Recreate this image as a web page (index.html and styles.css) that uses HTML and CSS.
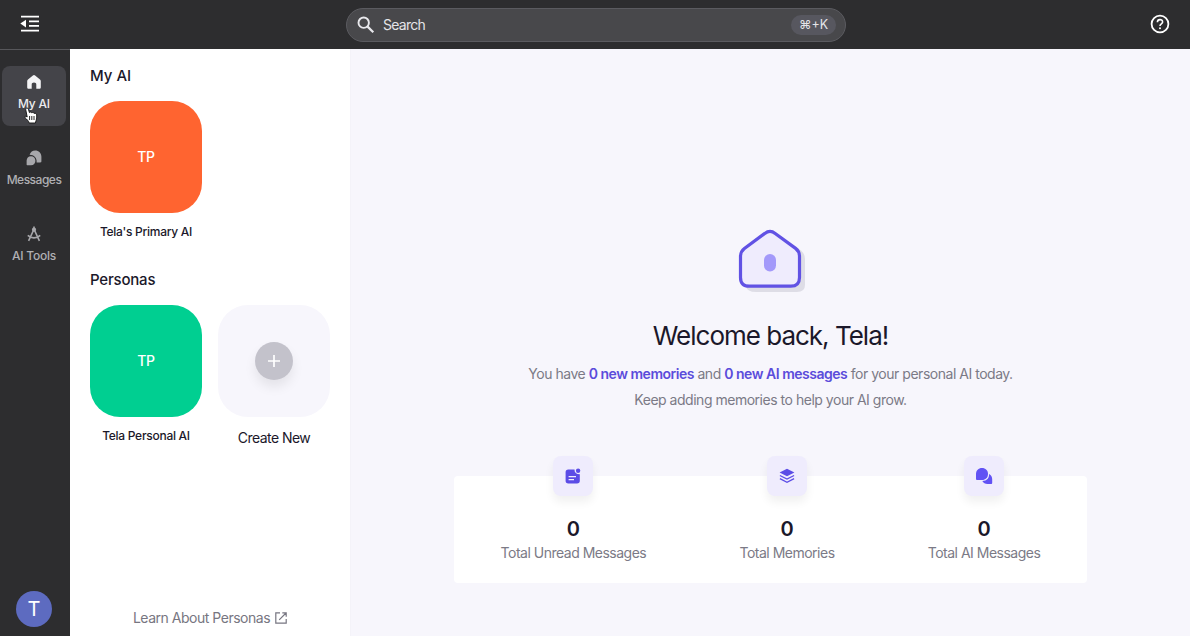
FILE: index.html
```html
<!DOCTYPE html>
<html lang="en">
<head>
<meta charset="utf-8">
<title>Personal AI</title>
<link rel="stylesheet" href="styles.css">
</head>
<body>
<div class="app">
  <header class="topbar">
    <svg class="menu-icon" viewBox="0 0 20 18" width="20" height="18"><path d="M1 1.6H19M9 6.3H19M9 10.9H19M1 15.6H19" stroke="#fff" stroke-width="1.7" fill="none"/><path d="M0.3 8.6L6 4.8V12.4Z" fill="#fff"/></svg>
    <div class="search">
      <svg viewBox="0 0 18 18" width="18" height="18"><circle cx="6.7" cy="6.7" r="5.2" fill="none" stroke="#e8e8ec" stroke-width="1.9"/><path d="M10.6 10.6L16.3 16.3" stroke="#e8e8ec" stroke-width="2.2"/></svg>
      <span class="search-text">Search</span>
      <span class="shortcut">⌘+K</span>
    </div>
    <svg class="help-icon" viewBox="0 0 20 20" width="20" height="20"><circle cx="10" cy="10" r="8.4" fill="none" stroke="#fff" stroke-width="1.8"/><path d="M7.4 8.2C7.4 4.7 12.6 4.8 12.6 8C12.6 9.9 10 9.9 10 12" fill="none" stroke="#fff" stroke-width="1.6"/><circle cx="10" cy="14.3" r="1" fill="#fff"/></svg>
  </header>
  <div class="body">
    <nav class="rail">
      <a class="rail-item active"><svg viewBox="0 0 16 16" width="16" height="16"><path d="M8 1.1C8.4 1.1 8.8 1.3 9.1 1.5L14 5.6C14.5 6 14.8 6.5 14.8 7.1V13.2C14.8 14.2 14.2 14.8 13.2 14.8H10.3V10.5C10.3 9.3 9.4 8.6 8 8.6S5.7 9.3 5.7 10.5V14.8H2.8C1.8 14.8 1.2 14.2 1.2 13.2V7.1C1.2 6.5 1.5 6 2 5.6L6.9 1.5C7.2 1.3 7.6 1.1 8 1.1Z" fill="#f4f4f6"/></svg><span class="t-myai">My AI</span></a>
      <a class="rail-item"><svg viewBox="0 0 16 16" width="16" height="16"><path d="M3.6 4.8C4.5 2.1 6.6 .6 9.2 .6C12.8 .6 15.4 3.2 15.4 6.8V11.2C15.4 12 15 12.4 14.2 12.4H10.6C11.2 8.2 8 4.8 3.6 4.8Z" fill="#a7a7ab"/><path d="M.6 10.7C.6 8.1 2.4 6.2 5 6.2S9.4 8.1 9.4 10.7C9.4 13.3 7.6 15.2 5 15.2H1.6C.9 15.2 .6 14.8 .6 14.2Z" fill="#a7a7ab"/></svg><span class="t-messages">Messages</span></a>
      <a class="rail-item"><svg viewBox="0 0 16 16" width="16" height="16"><path d="M8 .6V3M7.4 4.5L2.6 14.8M8.6 4.5L13.4 14.8M1.8 9.4C5.2 12.7 10.8 12.7 14.2 9.4" fill="none" stroke="#a7a7ab" stroke-width="1.6"/><circle cx="8" cy="3.7" r="2.1" fill="#a7a7ab"/></svg><span class="t-tools">AI Tools</span></a>
      <div class="avatar">T</div>
      <svg class="cursor" viewBox="0 0 14 17" width="14" height="17"><path d="M2.4 1.2C3.6 .6 4.3 1.6 4.6 2.8L5.4 5.6C6.4 4.8 7.4 5 7.8 5.9C8.7 5.2 9.8 5.4 10.1 6.4C11.5 5.8 12.7 6.6 12.7 8V11C12.7 12.9 11.6 14 11.4 16H5.2C4.8 14.2 2.9 12.4 1.1 10.7C.3 9.7 1.5 8.7 3.2 10L1.8 3C1.6 2.2 1.7 1.5 2.4 1.2Z" fill="#fff" stroke="#111" stroke-width=".9"/><path d="M5.6 9V13M7.8 9V13M10 9V13" stroke="#111" stroke-width=".9"/></svg>
    </nav>
    <aside class="panel">
      <h2 class="h-myai">My AI</h2>
      <div class="tiles">
        <div class="tile"><div class="square orange">TP</div><span class="name n-primary">Tela's Primary AI</span></div>
      </div>
      <h2 class="h-personas">Personas</h2>
      <div class="tiles">
        <div class="tile"><div class="square green">TP</div><span class="name n-personal">Tela Personal AI</span></div>
        <div class="tile"><div class="square blank"><span class="plus"><svg viewBox="0 0 14 14" width="14" height="14"><path d="M7 1V13M1 7H13" stroke="#fff" stroke-width="1.7"/></svg></span></div><span class="name create">Create New</span></div>
      </div>
      <a class="learn"><span>Learn About Personas</span><svg viewBox="0 0 12 12" width="12" height="12"><path d="M5 .9H.8V11.2H11.2V7M7.3 .8H11.2V4.7M11 1L4.2 7.8" fill="none" stroke="#777681" stroke-width="1.2"/></svg></a>
    </aside>
    <main class="main">
      <svg class="house" viewBox="0 0 72 70" width="72" height="70"><path d="M12 27L36 8L62 22Q68 26 68 32V58Q68 65 60 65H19Q10 65 9 59Z" fill="#dedde6"/><path d="M27.8 6.4Q33 2.4 38.2 6.4L58.6 21.4Q62.5 24.4 62.5 29.5V50.5Q62.5 59.2 53.8 59.2H12.2Q3.5 59.2 3.5 50.5V29.5Q3.5 24.4 7.4 21.4Z" fill="#efecfd" stroke="#6152e4" stroke-width="3.2"/><rect x="27" y="27" width="12" height="17.5" rx="6" fill="#a399fa"/></svg>
      <h1>Welcome back, Tela!</h1>
      <p class="line1">You have <b>0 new memories</b> and <b>0 new AI messages</b> for your personal AI today.</p>
      <p class="line2">Keep adding memories to help your AI grow.</p>
      <section class="stats">
        <div class="stat"><span class="badge"><svg viewBox="0 0 16 16" width="16" height="16"><path d="M3.3 1.4H9.5Q9.3 5.8 14.8 6.3V12.7Q14.8 15.4 12 15.4H3.3Q.6 15.4 .6 12.7V4Q.6 1.4 3.3 1.4Z" fill="#5b4ce6"/><circle cx="13.1" cy="2.8" r="2.2" fill="#5b4ce6"/><path d="M3.6 8.7H11M3.6 11.7H9" stroke="#efecfd" stroke-width="1.3"/></svg></span><strong>0</strong><span class="label s1">Total Unread Messages</span></div>
        <div class="stat"><span class="badge"><svg viewBox="0 0 16 16" width="16" height="16"><path d="M8 .7L15.4 4.5L8 8.3L.6 4.5Z" fill="#5b4ce6"/><path d="M.9 7.5L8 11.1L15.1 7.5M.9 10.7L8 14.3L15.1 10.7" fill="none" stroke="#5b4ce6" stroke-width="1.3"/></svg></span><strong>0</strong><span class="label s2">Total Memories</span></div>
        <div class="stat"><span class="badge"><svg viewBox="0 0 18 18" width="18" height="18"><path d="M1 7C1 3.4 3.5 1 7 1S13 3.5 13 7S10.5 13 7 13H2.3C1.4 13 1 12.6 1 11.7Z" fill="#6152f4"/><path d="M14 7.1C16.3 8.2 17.2 10.2 17.2 12.3V15.8C17.2 16.6 16.8 17 16 17H12.5C10.3 17 8.3 16.1 7.3 14.1C11.7 14.2 14.4 11.2 14 7.1Z" fill="#6152f4"/></svg></span><strong>0</strong><span class="label s3">Total AI Messages</span></div>
      </section>
    </main>
  </div>
</div>
</body>
</html>
```
FILE: styles.css
```css
* { box-sizing: border-box; }
body { margin: 0; font-family: Inter, "Noto Sans", sans-serif; background: #2d2d2f; }
h1, h2, p { margin: 0; }
svg { display: block; flex: none; }
.app { width: 1190px; height: 636px; display: flex; flex-direction: column; overflow: hidden; }
.topbar { height: 49px; flex: none; display: grid; grid-template-columns: 346px 500px 1fr; align-items: center; background: #2d2d2f; }
.menu-icon { margin: 0 0 2px 20px; }
.search { height: 34px; display: flex; align-items: center; padding: 0 9px 0 11px; border: 1px solid #5b5b60; border-radius: 17px; background: #48484b; color: #e4e4e8; font-size: 14px; }
.search svg { margin-left: -1px; }
.search-text { margin-left: 8px; flex: 1; letter-spacing: -.75px; }
.shortcut { width: 45px; height: 20px; border-radius: 10px; background: #57575f; display: flex; align-items: center; justify-content: center; font-size: 12.5px; }
.help-icon { justify-self: end; margin: 0 20px 1px 0; }
.body { flex: 1; display: flex; min-height: 0; }
.rail { width: 70px; flex: none; position: relative; display: flex; flex-direction: column; gap: 16px; padding: 16px 4px 9px 2px; background: #2d2d2f; border-top: 1px solid #57575b; color: #b0b0b4; font-size: 12px; font-weight: 500; }
.rail-item { height: 60px; flex: none; border-radius: 8px; display: flex; flex-direction: column; align-items: center; gap: 6px; padding-top: 8px; line-height: 15px; white-space: nowrap; }
.active { background: #444449; color: #ececef; }
.t-myai { letter-spacing: -.2px; }
.t-messages { letter-spacing: -.5px; }
.t-tools { letter-spacing: -.25px; }
.avatar { width: 36px; height: 36px; border-radius: 50%; margin: auto 0 0 14px; background: #5d6bc0; color: #fff; display: grid; place-items: center; font-size: 20px; font-weight: 400; }
.cursor { position: absolute; left: 24px; top: 57px; }
.panel { width: 281px; flex: none; background: #fff; padding: 16px 20px 9px; display: flex; flex-direction: column; color: #1b182a; border-right: 1px solid #f4f3f9; }
h2 { font-size: 15px; line-height: 22px; font-weight: 500; }
.tiles { display: flex; gap: 16px; margin-top: 14px; }
.h-personas { margin-top: 29px; letter-spacing: -.2px; }
.tile { width: 112px; display: flex; flex-direction: column; align-items: center; }
.square { width: 112px; height: 112px; border-radius: 30px; display: grid; place-items: center; color: #fff; font-size: 14px; font-weight: 500; letter-spacing: -.2px; }
.orange { background: #ff6430; padding-bottom: 1px; }
.green { background: #00cf91; padding-bottom: 1px; }
.blank { background: #f7f6fc; }
.plus { width: 38px; height: 38px; border-radius: 50%; background: #c3c2cb; display: grid; place-items: center; box-shadow: 0 7px 12px #00000014; }
.name { margin-top: 11px; font-size: 12px; line-height: 16px; font-weight: 500; white-space: nowrap; letter-spacing: -.27px; }
.create { margin-top: 12px; font-size: 14px; line-height: 18px; font-weight: 400; letter-spacing: -.55px; }
.learn { margin-top: auto; display: flex; justify-content: center; align-items: center; gap: 5px; font-size: 14px; line-height: 18px; letter-spacing: -.48px; color: #777681; }
.main { flex: 1; background: #f7f6fc; display: flex; flex-direction: column; align-items: center; padding-top: 178px; color: #1b182a; }
.house { display: block; margin-left: 5px; }
h1 { font-size: 26px; line-height: 32px; font-weight: 400; margin-top: 23px; letter-spacing: -1px; }
p { font-size: 14px; line-height: 20px; color: #7b7a86; white-space: nowrap; letter-spacing: -.48px; }
b { color: #5b4cdb; font-weight: 600; }
.line1 { margin-top: 12px; }
.line2 { margin-top: 6px; }
.stats { width: 633px; height: 107px; margin-top: 66px; background: #fff; border-radius: 4px; display: flex; justify-content: space-around; }
.stat { display: flex; flex-direction: column; align-items: center; margin-top: -20px; }
.badge { width: 40px; height: 40px; border-radius: 8px; background: #efecfd; display: grid; place-items: center; box-shadow: 0 6px 10px #0000000f; flex: none; }
strong { font-size: 20px; line-height: 24px; font-weight: 600; margin-top: 21px; }
.label { font-size: 14px; line-height: 18px; margin-top: 3px; color: #7b7a86; white-space: nowrap; letter-spacing: -.5px; }
```
